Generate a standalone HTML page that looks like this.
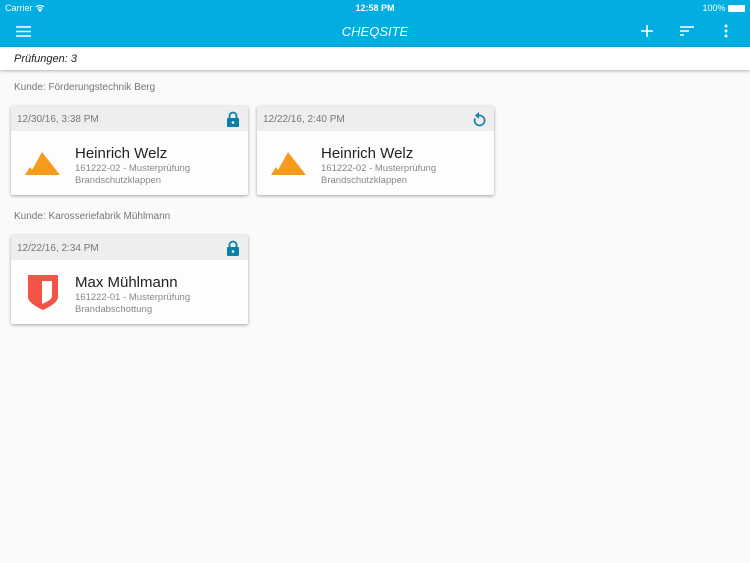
<!DOCTYPE html>
<html><head><meta charset="utf-8"><style>
*{margin:0;padding:0;box-sizing:border-box}
body{width:750px;height:563px;background:#fafafa;font-family:"Liberation Sans",sans-serif;position:relative;overflow:hidden}
.top{position:absolute;left:0;top:0;width:750px;height:47px;background:#02ade2}
.sb{position:absolute;top:3px;color:#fff;font-size:9px}
.title{position:absolute;left:0;width:750px;top:24px;text-align:center;color:#fff;font-style:italic;font-size:13px}
.bar{position:absolute;left:0;top:47px;width:750px;height:23px;background:#fff;box-shadow:0 1px 3px rgba(0,0,0,.3);font-size:11px;font-style:italic;color:#222;padding:6px 0 0 14px}
.kunde{position:absolute;left:14px;font-size:10px;color:#777}
.card{position:absolute;width:237px;height:89px;background:#fdfdfd;border-radius:2px;box-shadow:0 1px 3px rgba(0,0,0,.35)}
.ch{height:25px;background:#eeeeee;font-size:10px;color:#777;padding:8px 0 0 6px;position:relative}
.ch svg{position:absolute;right:8px;top:5px}
.ic{position:absolute;left:14px;top:45px}
.nm{position:absolute;left:64px;top:39px;font-size:15px;color:#222}
.s1{position:absolute;left:64px;top:57px;font-size:9.5px;color:#888}
.s2{position:absolute;left:64px;top:69px;font-size:9.5px;color:#888}
</style></head><body>
<div class="top">
<div class="sb" style="left:5px">Carrier <svg width="10" height="8" viewBox="0 0 10 8" style="vertical-align:-1px"><path d="M1 3a6 6 0 0 1 8 0M2.5 4.6a4 4 0 0 1 5 0M5 7.5l-1.3-1.5a2 2 0 0 1 2.6 0z" stroke="#fff" fill="none" stroke-width="1.1"/></svg></div>
<div class="sb" style="left:0;width:750px;text-align:center;font-weight:bold">12:58 PM</div>
<div class="sb" style="right:5px">100% <span style="display:inline-block;width:17px;height:7px;background:#fff;border-radius:1px;vertical-align:-1px"></span></div>
<svg style="position:absolute;left:16px;top:26px" width="15" height="11"><path d="M0 1h15M0 5.5h15M0 10h15" stroke="#fff" stroke-width="1.6"/></svg>
<div class="title">CHEQSITE</div>
<svg style="position:absolute;left:641px;top:25px" width="12" height="12"><path d="M6 0v12M0 6h12" stroke="#fff" stroke-width="1.6"/></svg>
<svg style="position:absolute;left:680px;top:26px" width="14" height="10"><path d="M0 1h14M0 5h9M0 9h4" stroke="#fff" stroke-width="1.6"/></svg>
<svg style="position:absolute;left:724px;top:24px" width="4" height="14"><circle cx="2" cy="2" r="1.5" fill="#fff"/><circle cx="2" cy="7" r="1.5" fill="#fff"/><circle cx="2" cy="12" r="1.5" fill="#fff"/></svg>
</div>
<div class="bar">Prüfungen: 3</div>
<div class="kunde" style="top:82px">Kunde: Förderungstechnik Berg</div>
<div class="kunde" style="top:211px">Kunde: Karosseriefabrik Mühlmann</div>

<div class="card" style="left:11px;top:106px">
<div class="ch">12/30/16, 3:38 PM<svg width="14" height="16" viewBox="0 0 14 16"><path d="M3.5 7V5a3.5 3.5 0 0 1 7 0v2" stroke="#0a7fa8" stroke-width="1.8" fill="none"/><rect x="1" y="7" width="12" height="9" rx="1" fill="#0a7fa8"/><circle cx="7" cy="11.5" r="1.3" fill="#fff"/></svg></div>
<svg class="ic" width="36" height="25" viewBox="0 0 36 25"><path d="M0 24L5 16l2 3L17 1l18 23z" fill="#f79a1e"/></svg>
<div class="nm">Heinrich Welz</div><div class="s1">161222-02 - Musterprüfung</div><div class="s2">Brandschutzklappen</div>
</div>

<div class="card" style="left:257px;top:106px">
<div class="ch">12/22/16, 2:40 PM<svg width="14" height="16" viewBox="0 0 14 16"><path d="M3 7.5A5 5 0 1 0 7 4.5" stroke="#1a7fb0" stroke-width="1.7" fill="none"/><path d="M7 1v7l-4-3.5z" fill="#1a7fb0"/></svg></div>
<svg class="ic" width="36" height="25" viewBox="0 0 36 25"><path d="M0 24L5 16l2 3L17 1l18 23z" fill="#f79a1e"/></svg>
<div class="nm">Heinrich Welz</div><div class="s1">161222-02 - Musterprüfung</div><div class="s2">Brandschutzklappen</div>
</div>

<div class="card" style="left:11px;top:235px">
<div class="ch">12/22/16, 2:34 PM<svg width="14" height="16" viewBox="0 0 14 16"><path d="M3.5 7V5a3.5 3.5 0 0 1 7 0v2" stroke="#0a7fa8" stroke-width="1.8" fill="none"/><rect x="1" y="7" width="12" height="9" rx="1" fill="#0a7fa8"/><circle cx="7" cy="11.5" r="1.3" fill="#fff"/></svg></div>
<svg style="position:absolute;left:17px;top:40px" width="30" height="35" viewBox="0 0 30 35"><path d="M0 0h30v22q0 6-15 13Q0 28 0 22z" fill="#f45347"/><path d="M14 6h10v15q0 4-10 8z" fill="#fff"/></svg>
<div class="nm">Max Mühlmann</div><div class="s1">161222-01 - Musterprüfung</div><div class="s2">Brandabschottung</div>
</div>
</body></html>
